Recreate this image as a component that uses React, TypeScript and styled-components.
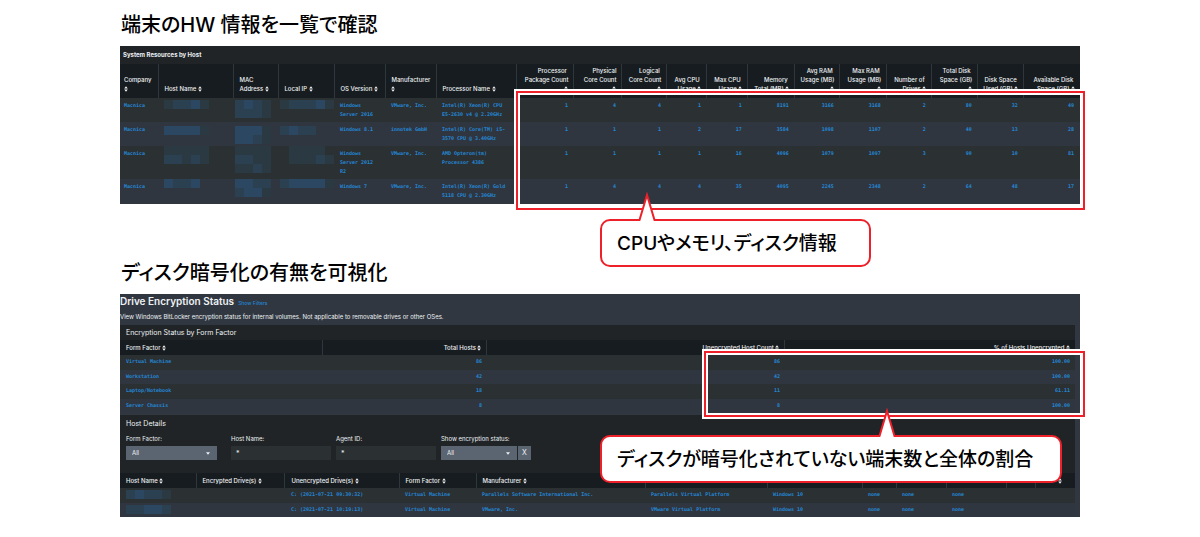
import React from "react";
import styled, { createGlobalStyle } from "styled-components";

const SANS = `"Inter", "Liberation Sans", "Noto Sans CJK JP", sans-serif`;
const MONO = `"DejaVu Sans Mono", "Liberation Mono", monospace`;
const JAPANESE = `"Inter", "Noto Sans CJK JP", sans-serif`;
const RED = "#ee2029";
const BLUE = "#2486d4";
const ROW_ODD = "#2b3033";
const ROW_EVEN = "#2f3640";
const HEAD = "#171c20";
const PANEL = "#202427";
const SLATE = "#303740";

const GlobalStyle = createGlobalStyle`
  * { box-sizing: border-box; }
  body { margin: 0; background: #fff; color: #000; font-family: ${SANS}; }
  button, input, select { font: inherit; color: inherit; margin: 0; border: 0; border-radius: 0; }
`;

const Page = styled.main`
  width: 80%;
  margin: 0 auto;
  padding: 11px 0 20px;
  display: flex;
  flex-direction: column;
  gap: 55px;
`;

const Section = styled.section`
  display: flex;
  flex-direction: column;
  gap: 7px;
`;

const Heading = styled.h2`
  margin: 0;
  padding-left: 1px;
  font-family: ${JAPANESE};
  font-size: 20px;
  line-height: 28px;
  font-weight: 500;
  font-feature-settings: "palt";
`;

const Figure = styled.div`
  position: relative;
  color: #eef1f3;
`;

const ResourcePanel = styled.div`
  background: ${PANEL};
`;

const PanelTitle = styled.h3<{ $height: number; $inset: number; $bold?: boolean }>`
  margin: 0;
  padding-left: ${(p) => p.$inset}px;
  height: ${(p) => p.$height}px;
  line-height: ${(p) => p.$height}px;
  font-size: ${(p) => (p.$bold ? 6 : 7)}px;
  font-weight: ${(p) => (p.$bold ? 700 : 400)};
`;

const Table = styled.table`
  width: 100%;
  table-layout: fixed;
  border-collapse: collapse;
`;

const Th = styled.th<{ $right?: boolean; $tall?: boolean; $pad: number; $end: number }>`
  height: ${(p) => (p.$tall ? 34 : 15)}px;
  padding: 0 ${(p) => p.$end}px ${(p) => (p.$tall ? 5 : 0)}px ${(p) => p.$pad}px;
  background: ${HEAD};
  text-align: ${(p) => (p.$right ? "right" : "left")};
  vertical-align: ${(p) => (p.$tall ? "bottom" : "middle")};
  font-weight: 400;
  font-size: 0;
  & + & { border-left: 1px solid #30373c; }
`;

const SortButton = styled.button<{ $right?: boolean }>`
  padding: 0;
  background: none;
  font-size: 6px;
  font-weight: 500;
  line-height: 9px;
  white-space: pre;
  text-align: ${(p) => (p.$right ? "right" : "left")};
`;

const SortSvg = styled.svg`
  width: 4px;
  height: 6px;
  vertical-align: -1px;
`;

const Row = styled.tr<{ $height: number; $index: number }>`
  height: ${(p) => p.$height}px;
  background: ${(p) => (p.$index % 2 ? ROW_EVEN : ROW_ODD)};
`;

const Td = styled.td<{ $right?: boolean; $pad: number; $end: number; $top: number }>`
  padding: ${(p) => p.$top}px ${(p) => p.$end}px 0 ${(p) => p.$pad}px;
  text-align: ${(p) => (p.$right ? "right" : "left")};
  vertical-align: top;
  font-family: ${MONO};
  font-size: 5px;
  font-weight: 700;
  line-height: 9px;
  white-space: pre;
  color: ${BLUE};
`;

const MosaicSvg = styled.svg`
  display: block;
`;

const EncryptionPanel = styled.div`
  background: ${SLATE};
  padding-right: 5px;
`;

const Intro = styled.header`
  height: 31px;
`;

const TitleLine = styled.div`
  display: flex;
  align-items: baseline;
  gap: 4px;
  line-height: 14px;
`;

const Title = styled.h3`
  margin: 0;
  font-size: 10px;
  font-weight: 600;
`;

const FilterLink = styled.a`
  font-size: 5px;
  font-weight: 500;
  color: ${BLUE};
  text-decoration: none;
`;

const Description = styled.p`
  margin: 0;
  padding-top: 2px;
  font-size: 6px;
  line-height: 10px;
`;

const Block = styled.div`
  background: ${PANEL};
`;

const Strip = styled.div`
  height: 2px;
  background: ${SLATE};
`;

const Filters = styled.form`
  display: flex;
  padding: 3px 6px 13px;
`;

const Field = styled.label<{ $width: number; $gap: number }>`
  width: ${(p) => p.$width}px;
  margin-right: ${(p) => p.$gap}px;
  font-size: 6px;
  line-height: 8px;
  white-space: nowrap;
  display: flex;
  flex-direction: column;
  gap: 3px;
`;

const TextInput = styled.input`
  width: 100%;
  height: 14px;
  padding: 0 5px;
  background: #2b3033;
  font-size: 7px;
`;

const SelectLine = styled.span`
  position: relative;
  display: flex;
`;

const Select = styled.select`
  appearance: none;
  width: 100%;
  height: 14px;
  padding: 0 6px;
  background: #5b6571;
`;

const Caret = styled.svg`
  position: absolute;
  right: 7px;
  top: 6px;
  width: 4px;
  height: 3px;
  pointer-events: none;
`;

const ClearButton = styled.button`
  align-self: flex-end;
  width: 13px;
  height: 14px;
  padding: 0;
  background: #5b6571;
  font-size: 7px;
  line-height: 14px;
`;

const Frame = styled.div<{ $left: string; $top: number; $bottom: number }>`
  position: absolute;
  left: ${(p) => p.$left};
  right: -5px;
  top: ${(p) => p.$top}px;
  bottom: ${(p) => p.$bottom}px;
  border: 2px solid ${RED};
  box-shadow: 0 0 0 2px #fff, inset 0 0 0 2px #fff;
`;

const Callout = styled.p<{ $top: number; $width: number }>`
  position: absolute;
  left: 50%;
  top: ${(p) => p.$top}px;
  width: ${(p) => p.$width}px;
  height: 48px;
  margin: 0;
  padding-left: 15px;
  border: 2px solid ${RED};
  border-radius: 10px;
  background: #fff;
  color: #000;
  font-family: ${JAPANESE};
  font-size: 19px;
  font-weight: 500;
  line-height: 46px;
  font-feature-settings: "palt";
  white-space: nowrap;
`;

const Tail = styled.svg<{ $left: number }>`
  position: absolute;
  left: ${(p) => p.$left}px;
  top: -29px;
  width: 20px;
  height: 30px;
`;

const SortIcon = () => (
  <SortSvg viewBox="0 0 4 6" aria-hidden="true">
    <path d="M2 0.3 3.8 2.5H0.2ZM2 5.7 3.8 3.5H0.2Z" fill="#eef1f3" />
  </SortSvg>
);

const CaretIcon = () => (
  <Caret viewBox="0 0 4 3" aria-hidden="true">
    <path d="M0 0.3H4L2 2.8Z" fill="#eef1f3" />
  </Caret>
);

const CalloutTail = ({ left }: { left: number }) => (
  <Tail $left={left} viewBox="0 0 20 30" aria-hidden="true">
    <path d="M2 30 10 3 18 30Z" fill="#fff" />
    <path d="M0 28H2.5L10 3 17.5 28H20" fill="none" stroke={RED} strokeWidth="2" />
  </Tail>
);

const SHADES = ["none", "#2b3943", "#2b4152", "#2c4762"];

/* Masked value: each digit is the shade of one 9px block, one string per line. */
const Mosaic = ({ rows }: { rows: string[] }) => (
  <MosaicSvg width={rows[0].length * 9} height={rows.length * 9} shapeRendering="crispEdges" aria-hidden="true">
    {rows.map((line, y) =>
      line.split("").map((s, x) => (
        <rect key={`${x}-${y}`} x={x * 9} y={y * 9} width="9" height="9" fill={SHADES[Number(s)]} />
      ))
    )}
  </MosaicSvg>
);

type Column = { label: string; width: number; right?: boolean; pad?: number };
type Cell = string | string[];

const resourceColumns: Column[] = [
  { label: "Company\n", width: 39, pad: 4 },
  { label: "Host Name ", width: 75 },
  { label: "MAC\nAddress ", width: 45 },
  { label: "Local IP ", width: 56 },
  { label: "OS Version ", width: 51 },
  { label: "Manufacturer\n", width: 51 },
  { label: "Processor Name ", width: 80 },
  { label: "Processor \nPackage Count\n", width: 57, right: true },
  { label: "Physical\nCore Count\n", width: 48, right: true },
  { label: "Logical \nCore Count\n", width: 45, right: true },
  { label: "Avg CPU \nUsage ", width: 40, right: true },
  { label: "Max CPU \nUsage ", width: 41, right: true },
  { label: "Memory \nTotal (MB) ", width: 47, right: true },
  { label: "Avg RAM \nUsage (MB)\n", width: 45, right: true },
  { label: "Max RAM \nUsage (MB)\n", width: 47, right: true },
  { label: "Number of \nDrives ", width: 45, right: true },
  { label: "Total Disk \nSpace (GB)\n", width: 46, right: true },
  { label: "Disk Space \nUsed (GB) ", width: 46, right: true },
  { label: "Available Disk \nSpace (GB) ", width: 56, right: true },
];

const resourceRows: { height: number; top: number; cells: Cell[] }[] = [
  {
    height: 24, top: 2,
    cells: ["Macnica", ["12231"], ["2321", "2221"], ["122231"], "Windows\nServer 2016", "VMware, Inc.",
      "Intel(R) Xeon(R) CPU\nE5-2630 v4 @ 2.20GHz", "1", "4", "4", "1", "1", "8191", "3166", "3168", "2", "80", "32", "49"],
  },
  {
    height: 24, top: 4,
    cells: ["Macnica", ["33331"], ["3331", "3321"], ["2322"], "Windows 8.1", "innotek GmbH",
      "Intel(R) Core(TM) i5-\n3570 CPU @ 3.40GHz", "1", "1", "1", "2", "17", "3584", "1098", "1107", "2", "40", "13", "28"],
  },
  {
    height: 33, top: 0,
    cells: ["Macnica", ["11111", "22121"], ["1111", "2211", "1121"], ["011110", "011121"], "Windows\nServer 2012\nR2", "VMware, Inc.",
      "AMD Opteron(tm)\nProcessor 4386", "1", "1", "1", "1", "16", "4096", "1079", "1097", "3", "90", "10", "81"],
  },
  {
    height: 25, top: 0,
    cells: ["Macnica", ["3223"], ["3322", "2331"], ["233331"], "Windows 7", "VMware, Inc.",
      "Intel(R) Xeon(R) Gold\n5118 CPU @ 2.30GHz", "1", "4", "4", "4", "35", "4095", "2245", "2348", "2", "64", "48", "17"],
  },
];

const factorColumns: Column[] = [
  { label: "Form Factor ", width: 203, pad: 6 },
  { label: "Total Hosts ", width: 164, right: true },
  { label: "Unencrypted Host Count ", width: 298, right: true },
  { label: "% of Hosts Unencrypted ", width: 290, right: true },
];

const factorRows = [
  ["Virtual Machine", "86", "86", "100.00"],
  ["Workstation", "42", "42", "100.00"],
  ["Laptop/Notebook", "18", "11", "61.11"],
  ["Server Chassis", "8", "8", "100.00"],
];

const hostColumns: Column[] = [
  { label: "Host Name ", width: 77, pad: 6 },
  { label: "Encrypted Drive(s) ", width: 88 },
  { label: "Unencrypted Drive(s) ", width: 115, pad: 6 },
  { label: "Form Factor ", width: 77 },
  { label: "Manufacturer ", width: 169 },
  { label: "", width: 122 },
  { label: "", width: 95 },
  { label: "", width: 34 },
  { label: "", width: 50 },
  { label: "", width: 60 },
  { label: "", width: 29 },
  { label: " ", width: 39, pad: 20 },
];

const hostRows: Cell[][] = [
  [["23221"], "", "C: (2021-07-21 09:30:32)", "Virtual Machine", "Parallels Software International Inc.", "Parallels Virtual Platform", "Windows 10", "none", "none", "none", "", ""],
  [["22332"], "", "C: (2021-07-21 10:19:13)", "Virtual Machine", "VMware, Inc.", "VMware Virtual Platform", "Windows 10", "none", "none", "none", "", ""],
];

const Columns = ({ columns }: { columns: Column[] }) => {
  const total = columns.reduce((sum, c) => sum + c.width, 0);
  return (
    <colgroup>
      {columns.map((c, i) => (
        <col key={i} style={{ width: `${(c.width / total) * 100}%` }} />
      ))}
    </colgroup>
  );
};

const HeaderRow = ({ columns, tall }: { columns: Column[]; tall?: boolean }) => (
  <thead>
    <tr>
      {columns.map((c, i) => (
        <Th key={i} $right={c.right} $tall={tall} $pad={c.pad ?? 5} $end={c.right ? 5 : 0}>
          {c.label && (
            <SortButton type="button" $right={c.right}>
              {c.label}
              <SortIcon />
            </SortButton>
          )}
        </Th>
      ))}
    </tr>
  </thead>
);

export default function App() {
  return (
    <>
      <GlobalStyle />
      <Page>
        <Section>
          <Heading>端末のHW 情報を一覧で確認</Heading>
          <Figure>
            <ResourcePanel>
              <PanelTitle $height={18} $inset={3} $bold>System Resources by Host</PanelTitle>
              <Table>
                <Columns columns={resourceColumns} />
                <HeaderRow columns={resourceColumns} tall />
                <tbody>
                  {resourceRows.map((row, r) => (
                    <Row key={r} $height={row.height} $index={r}>
                      {row.cells.map((cell, i) => {
                        const masked = Array.isArray(cell);
                        const col = resourceColumns[i];
                        return (
                          <Td
                            key={i}
                            $right={col.right}
                            $pad={masked && i > 1 ? 1 : col.pad ?? 5}
                            $end={col.right ? 6 : 0}
                            $top={masked ? row.top : 3}
                          >
                            {masked ? <Mosaic rows={cell} /> : cell}
                          </Td>
                        );
                      })}
                    </Row>
                  ))}
                </tbody>
              </Table>
            </ResourcePanel>
            <Frame $left="41.2%" $top={45} $bottom={-6} />
            <Callout $top={173} $width={271}>
              <CalloutTail left={35} />
              CPUやメモリ、ディスク情報
            </Callout>
          </Figure>
        </Section>

        <Section>
          <Heading>ディスク暗号化の有無を可視化</Heading>
          <Figure>
            <EncryptionPanel>
              <Intro>
                <TitleLine>
                  <Title>Drive Encryption Status</Title>
                  <FilterLink href="#filters">Show Filters</FilterLink>
                </TitleLine>
                <Description>
                  View Windows BitLocker encryption status for internal volumes. Not applicable to removable drives or other OSes.
                </Description>
              </Intro>
              <Block>
                <PanelTitle $height={15} $inset={6}>Encryption Status by Form Factor</PanelTitle>
                <Table>
                  <Columns columns={factorColumns} />
                  <HeaderRow columns={factorColumns} />
                  <tbody>
                    {factorRows.map((row, r) => (
                      <Row key={r} $height={r % 2 ? 14 : 15} $index={r}>
                        {row.map((cell, i) => (
                          <Td key={i} $right={i > 0} $pad={6} $end={5} $top={2}>{cell}</Td>
                        ))}
                      </Row>
                    ))}
                  </tbody>
                </Table>
              </Block>
              <Strip />
              <Block id="filters">
                <PanelTitle $height={17} $inset={6}>Host Details</PanelTitle>
                <Filters>
                  <Field $width={91} $gap={14}>
                    Form Factor:
                    <SelectLine>
                      <Select defaultValue="All"><option>All</option></Select>
                      <CaretIcon />
                    </SelectLine>
                  </Field>
                  <Field $width={100} $gap={5}>
                    Host Name:
                    <TextInput defaultValue="*" />
                  </Field>
                  <Field $width={100} $gap={5}>
                    Agent ID:
                    <TextInput defaultValue="*" />
                  </Field>
                  <Field $width={76} $gap={1}>
                    Show encryption status:
                    <SelectLine>
                      <Select defaultValue="All"><option>All</option></Select>
                      <CaretIcon />
                    </SelectLine>
                  </Field>
                  <ClearButton type="button" aria-label="Clear encryption status">X</ClearButton>
                </Filters>
                <Table>
                  <Columns columns={hostColumns} />
                  <HeaderRow columns={hostColumns} />
                  <tbody>
                    {hostRows.map((row, r) => (
                      <Row key={r} $height={r % 2 ? 14 : 15} $index={r}>
                        {row.map((cell, i) => (
                          <Td key={i} $pad={hostColumns[i].pad ?? 5} $end={0} $top={2}>
                            {Array.isArray(cell) ? <Mosaic rows={cell} /> : cell}
                          </Td>
                        ))}
                      </Row>
                    ))}
                  </tbody>
                </Table>
              </Block>
            </EncryptionPanel>
            <Frame $left="60.8%" $top={57} $bottom={100} />
            <Callout $top={141} $width={462}>
              <CalloutTail left={275} />
              ディスクが暗号化されていない端末数と全体の割合
            </Callout>
          </Figure>
        </Section>
      </Page>
    </>
  );
}
